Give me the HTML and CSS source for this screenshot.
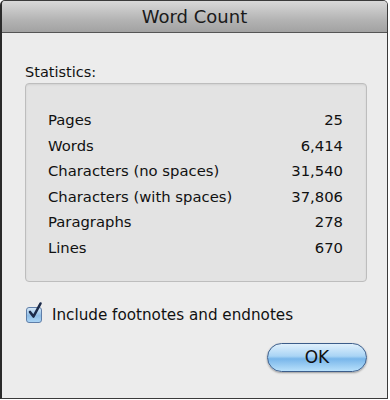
FILE: index.html
```html
<!doctype html>
<html>
<head>
  <meta charset="UTF-8">
  <title>Word Count</title>
  <link rel="stylesheet" href="styles.css">
</head>
<body>
  <div class="window">
    <div class="titlebar">Word Count</div>
    <div class="content">
      <div class="caption">Statistics:</div>
      <div class="group">
        <div class="row"><span>Pages</span><span>25</span></div>
        <div class="row"><span>Words</span><span>6,414</span></div>
        <div class="row"><span>Characters (no spaces)</span><span>31,540</span></div>
        <div class="row"><span>Characters (with spaces)</span><span>37,806</span></div>
        <div class="row"><span>Paragraphs</span><span>278</span></div>
        <div class="row"><span>Lines</span><span>670</span></div>
      </div>
      <label class="check">
        <span class="box">
          <svg width="18" height="20" viewBox="0 0 18 20">
            <path d="M4 11 L7.5 15.5 L14.5 2.5" fill="none" stroke="#1c2b4a" stroke-width="2.6" stroke-linecap="round" stroke-linejoin="round"/>
          </svg>
        </span>
        Include footnotes and endnotes
      </label>
      <div class="actions">
        <button class="ok">OK</button>
      </div>
    </div>
  </div>
</body>
</html>
```
FILE: styles.css
```css
*{margin:0;
  padding:0;
  box-sizing:border-box;}
body{background:#fff;
     font-family:"DejaVu Sans", sans-serif;
     color:#111;}
.window{width:388px;
        height:399px;
        border:1px solid #3a3a3a;
        border-left:2px solid #2a2a2a;
        border-radius:5px 5px 0 0;
        background:#ececec;
        overflow:hidden;}
.titlebar{height:32px;
          line-height:31px;
          text-align:center;
          font-size:18px;
          color:#1a1a1a;
          background:linear-gradient(#d8d8d8, #b4b4b4 60%, #a2a2a2);
          border-bottom:1px solid #555;}
.content{padding:30px 20px 0 23px;}
.caption{font-size:14.5px;
         line-height:18px;
         margin-bottom:2px;}
.group{border:1px solid #bdbdbd;
       border-radius:4px;
       background:#e3e3e3;
       box-shadow:inset 0 1px 2px rgba(0,0,0,0.08);
       padding:23px 23px 20px 22px;}
.row{display:flex;
     justify-content:space-between;
     height:25.6px;
     line-height:25.6px;
     font-size:14.8px;}
.check{display:flex;
       align-items:center;
       gap:10px;
       margin-top:24px;
       margin-left:1px;
       height:18px;
       font-size:15.2px;}
.box{position:relative;
     width:16px;
     height:16px;
     border:1px solid #5f7ea8;
     border-radius:3px;
     background:linear-gradient(#d5e8f8, #8fbde6 55%, #a9d4f5);}
.box svg{position:absolute;
         left:-1px;
         top:-7px;}
.actions{display:flex;
         justify-content:flex-end;
         margin-top:19px;}
.ok{width:100px;
    height:29px;
    border:1px solid #3c5d8a;
    border-radius:15px;
    background:linear-gradient(#e0f0fc, #a9d4f5 45%, #78b6ea 55%, #b8e0fb);
    box-shadow:0 1px 2px rgba(0,0,0,0.35);
    font-family:"DejaVu Sans", sans-serif;
    font-size:17px;
    color:#111;}
```
